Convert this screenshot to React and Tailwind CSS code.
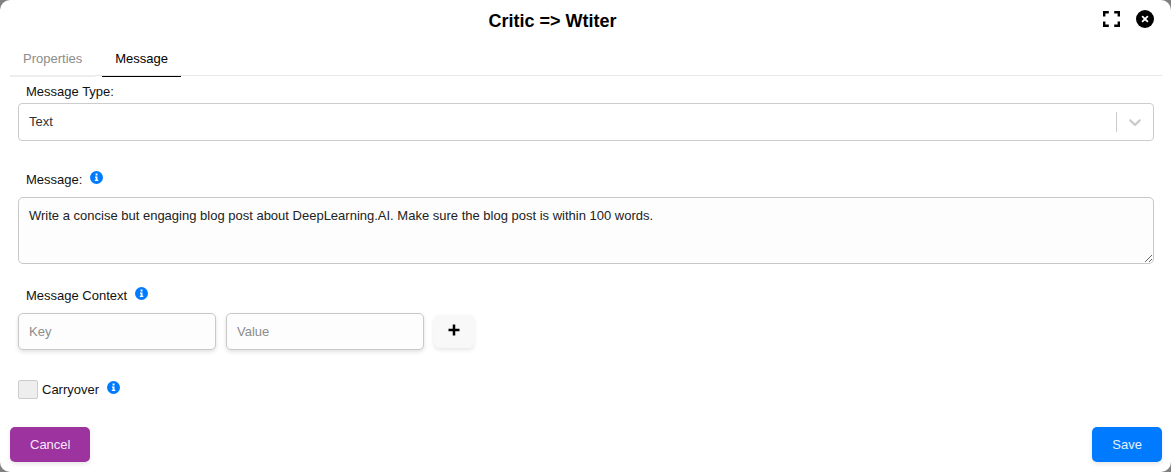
import { useState } from "react";

function FullscreenIcon() {
  return (
    <svg viewBox="0 0 17 16" className="h-4 w-[17px]" fill="none" stroke="currentColor" strokeWidth="2.4" aria-hidden="true">
      <path d="M1.2 5.5V1.2h4.6M11.2 1.2h4.6v4.3M15.8 10.5v4.3h-4.6M5.8 14.8H1.2v-4.3" />
    </svg>
  );
}

function CloseIcon() {
  return (
    <svg viewBox="0 0 18 18" className="size-[18px]" aria-hidden="true">
      <circle cx="9" cy="9" r="9" fill="currentColor" />
      <path d="M6.6 6.6l4.8 4.8M11.4 6.6l-4.8 4.8" stroke="#fff" strokeWidth="1.8" strokeLinecap="round" />
    </svg>
  );
}

function InfoIcon() {
  return (
    <svg viewBox="0 0 13 13" className="mt-px size-[13px] text-[#007bff]" aria-hidden="true">
      <circle cx="6.5" cy="6.5" r="6.5" fill="currentColor" />
      <path d="M5.6 2.6h1.9v1.8H5.6zM5 5.4h2.5v3.3h.8V10H4.8V8.7h.9V6.7H5z" fill="#fff" />
    </svg>
  );
}

function PlusIcon() {
  return (
    <svg viewBox="0 0 12 12" className="size-3" fill="none" stroke="currentColor" strokeWidth="2.5" aria-hidden="true">
      <path d="M6 .5v11M.5 6h11" />
    </svg>
  );
}

function ChevronIcon() {
  return (
    <svg viewBox="0 0 20 20" className="size-5" fill="currentColor" aria-hidden="true">
      <path d="M4.516 7.548c0.436-0.446 1.043-0.481 1.576 0l3.908 3.747 3.908-3.747c0.533-0.481 1.141-0.446 1.574 0 0.436 0.445 0.408 1.197 0 1.615-0.406 0.418-4.695 4.502-4.695 4.502-0.217 0.223-0.502 0.335-0.787 0.335s-0.57-0.112-0.789-0.335c0 0-4.287-4.084-4.695-4.502s-0.436-1.17 0-1.615z" />
    </svg>
  );
}

function InfoLabel({ htmlFor, children }) {
  return (
    <div className="flex h-5 items-start gap-2">
      <label htmlFor={htmlFor} className="leading-5">{children}</label>
      <InfoIcon />
    </div>
  );
}

const inputClass =
  "h-[37px] w-[198px] rounded-[5px] border border-[#c8c8c8] bg-[#fdfdfd] px-[10px] shadow-[0_2px_4px_rgba(0,0,0,0.12)] outline-none placeholder:text-[#8c8c8c]";

export default function App() {
  const [message, setMessage] = useState(
    "Write a concise but engaging blog post about DeepLearning.AI. Make sure the blog post is within 100 words."
  );
  const [carryover, setCarryover] = useState(false);

  return (
    <div className="bg-[#808080] font-['Liberation_Sans',Arial,sans-serif] text-[13px] text-[#111]">
      <div role="dialog" aria-labelledby="title" className="flex min-h-screen flex-col rounded-[10px] bg-white pr-[9px] pb-[10px] pl-[10px]">
        <header className="flex h-[42px] items-center gap-2 pr-2">
          <h2 id="title" className="flex-1 text-center text-lg font-bold text-black">Critic =&gt; Wtiter</h2>
          <div className="flex items-center gap-4 pb-1 text-black">
            <button type="button" aria-label="Full screen"><FullscreenIcon /></button>
            <button type="button" aria-label="Close"><CloseIcon /></button>
          </div>
        </header>

        <div role="tablist" className="flex h-[34px] gap-[7px] border-b border-[#e8e8e8]">
          <button type="button" role="tab" aria-selected="false" className="h-[35px] border-b-2 border-[#eee] px-[13px] text-[#8c8c8c]">Properties</button>
          <button type="button" role="tab" aria-selected="true" className="h-[35px] border-b border-black px-[13px] text-black">Message</button>
        </div>

        <form className="flex flex-1 flex-col" onSubmit={(e) => e.preventDefault()}>
          <div className="px-2">
            <div className="pt-[6px] pl-2">
              <label htmlFor="type" className="block h-[21px] leading-5">Message Type:</label>
            </div>
            <div className="grid items-center">
              <select id="type" className="col-start-1 row-start-1 h-[38px] w-full appearance-none rounded-[4px] border border-[#ccc] bg-white px-[10px] text-[#333] outline-none">
                <option>Text</option>
              </select>
              <div className="pointer-events-none col-start-1 row-start-1 flex items-center gap-2 justify-self-end pr-[9px] text-[#ccc]">
                <span className="h-5 w-px bg-[#ccc]" />
                <ChevronIcon />
              </div>
            </div>

            <div className="pt-[29px] pl-2">
              <InfoLabel htmlFor="message">Message:</InfoLabel>
            </div>
            <textarea
              id="message"
              value={message}
              onChange={(e) => setMessage(e.target.value)}
              className="mt-[7px] block h-[67px] w-full rounded-[5px] border border-[#c8c8c8] bg-[#fdfdfd] px-[10px] py-[9px] leading-[18px] text-[#222] outline-none"
            />

            <div className="pt-[22px] pl-2">
              <InfoLabel htmlFor="key">Message Context</InfoLabel>
            </div>
            <div className="mt-[7px] flex items-center gap-[10px]">
              <input id="key" type="text" placeholder="Key" className={inputClass} />
              <input type="text" placeholder="Value" aria-label="Value" className={inputClass} />
              <button type="button" aria-label="Add" className="flex h-[33px] w-10 items-center justify-center rounded-[5px] bg-[#f8f8f8] pb-1 text-black shadow-[0_2px_4px_rgba(0,0,0,0.1)]">
                <PlusIcon />
              </button>
            </div>

            <div className="mt-[30px] flex items-start gap-1">
              <input
                id="carryover"
                type="checkbox"
                checked={carryover}
                onChange={(e) => setCarryover(e.target.checked)}
                className="h-[19px] w-5 appearance-none rounded-[2px] border border-[#ccc] bg-[#eee] checked:bg-[#007bff]"
              />
              <InfoLabel htmlFor="carryover">Carryover</InfoLabel>
            </div>
          </div>

          <footer className="mt-auto flex justify-between pt-6">
            <button type="button" className="h-[35px] rounded-[5px] bg-[#9c339f] px-5 text-[#f8e8f8] shadow-[0_2px_4px_rgba(0,0,0,0.1)]">Cancel</button>
            <button type="submit" className="h-[35px] rounded-[5px] bg-[#007bff] px-5 text-[#e6f2ff] shadow-[0_2px_4px_rgba(0,0,0,0.1)]">Save</button>
          </footer>
        </form>
      </div>
    </div>
  );
}
